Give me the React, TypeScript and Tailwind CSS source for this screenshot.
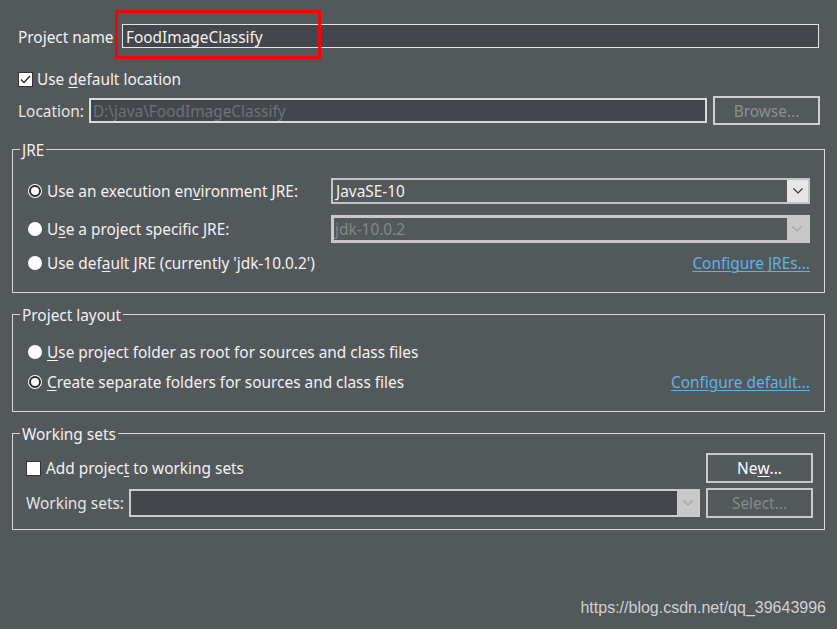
import React from "react";

const U = ({ children }: { children: React.ReactNode }) => (
  <span className="underline underline-offset-2 decoration-1">{children}</span>
);

const Radio = ({ selected }: { selected?: boolean }) =>
  selected ? (
    <span className="w-[14px] h-[14px] rounded-full bg-white flex items-center justify-center shrink-0">
      <span className="w-[12px] h-[12px] rounded-full border-[2px] border-[#2a2a2a] bg-white" />
    </span>
  ) : (
    <span className="w-[14px] h-[14px] rounded-full bg-white shrink-0" />
  );

const Chevron = ({ color }: { color: string }) => (
  <svg width="10" height="6" viewBox="0 0 10 6">
    <path d="M0.5 0.5 L5 5 L9.5 0.5" fill="none" stroke={color} strokeWidth="1.2" />
  </svg>
);

export default function App() {
  return (
    <div
      className="relative w-[837px] h-[629px] overflow-hidden bg-[#53585b] text-[15.4px] text-[#f2f2f2] leading-none"
      style={{ fontFamily: '"Noto Sans", "Open Sans", sans-serif' }}
    >
      <div className="flex flex-col pt-[24px]">
        {/* Project name */}
        <div className="flex items-center pl-[18px] pr-[18px] h-[24px]">
          <span className="w-[104px] pt-[3px]">Project name</span>
          <div className="flex-1 h-[24px] bg-[#43474b] border border-[#e2e2e2] flex items-center pl-[3px] pt-[3px]">
            FoodImageClassify
          </div>
        </div>

        {/* Use default location */}
        <div className="flex items-center pl-[18px] mt-[23px] h-[16px]">
          <span className="w-[15px] h-[15px] bg-white border border-[#333] flex items-center justify-center">
            <svg width="11" height="9" viewBox="0 0 11 9">
              <path d="M1 4.5 L4 7.5 L10 1" fill="none" stroke="#2d2d2d" strokeWidth="1.4" />
            </svg>
          </span>
          <span className="ml-[4px] pt-[2px]">
            Use <U>d</U>efault location
          </span>
        </div>

        {/* Location */}
        <div className="flex items-center pl-[18px] pr-[17px] mt-[9px] h-[29px]">
          <span className="w-[71px] text-[#e6e6e6] pt-[2px]">Location:</span>
          <div className="flex-1 h-[25px] bg-[#43474b] border-2 border-[#dadada] flex items-center pl-[2px] pt-[2px] text-[#6e7275]">
            D:\java\FoodImageClassify
          </div>
          <div className="ml-[6px] w-[107px] h-[29px] border-2 border-[#cfcfcf] flex items-center justify-center pt-[2px] text-[#8c8f91]">
            Browse...
          </div>
        </div>

        {/* JRE group */}
        <div className="relative mx-[12px] mt-[24px] h-[144px] border border-[#d8d8d8] pl-[15px] pr-[14px] pt-[28px]">
          <span className="absolute left-[7px] -top-[10px] px-[2px] pt-[2px] bg-[#53585b] leading-[18px]">JRE</span>
          <div className="flex items-center h-[26px]">
            <div className="w-[303px] flex items-center">
              <Radio selected />
              <span className="ml-[5px] pt-[2px]">
                Use an execution en<U>v</U>ironment JRE:
              </span>
            </div>
            <div className="flex-1 h-[26px] border-2 border-[#c4c4c4] flex items-stretch">
              <div className="flex-1 flex items-center pl-[3px] pt-[2px]">JavaSE-10</div>
              <div className="w-[21px] bg-[#e6e6e6] flex items-center justify-center">
                <Chevron color="#333" />
              </div>
            </div>
          </div>
          <div className="flex items-center h-[28px] mt-[11px]">
            <div className="w-[303px] flex items-center">
              <Radio />
              <span className="ml-[5px] pt-[2px]">
                U<U>s</U>e a project specific JRE:
              </span>
            </div>
            <div className="flex-1 h-[28px] border-[3px] border-[#c8c8c8] flex items-stretch">
              <div className="flex-1 flex items-center pl-[1px] pt-[2px] text-[#83878a]">jdk-10.0.2</div>
              <div className="w-[20px] bg-[#c8c8c8] flex items-center justify-center">
                <Chevron color="#a4a4a4" />
              </div>
            </div>
          </div>
          <div className="flex items-center h-[22px] mt-[9px]">
            <Radio />
            <span className="ml-[5px] pt-[2px]">
              Use def<U>a</U>ult JRE (currently 'jdk-10.0.2')
            </span>
            <span className="ml-auto pt-[2px] text-[#5ab5ea] underline underline-offset-2 decoration-1">Configure JREs...</span>
          </div>
        </div>

        {/* Project layout group */}
        <div className="relative mx-[12px] mt-[21px] h-[98px] border border-[#d8d8d8] pl-[15px] pr-[14px] pt-[26px]">
          <span className="absolute left-[7px] -top-[10px] px-[2px] pt-[2px] bg-[#53585b] leading-[18px]">Project layout</span>
          <div className="flex items-center h-[22px]">
            <Radio />
            <span className="ml-[5px] pt-[2px]">
              <U>U</U>se project folder as root for sources and class files
            </span>
          </div>
          <div className="flex items-center h-[22px] mt-[8px]">
            <Radio selected />
            <span className="ml-[5px] pt-[2px]">
              <U>C</U>reate separate folders for sources and class files
            </span>
            <span className="ml-auto pt-[2px] text-[#5ab5ea] underline underline-offset-2 decoration-1">Configure default...</span>
          </div>
        </div>

        {/* Working sets group */}
        <div className="relative mx-[12px] mt-[21px] h-[97px] border border-[#d8d8d8] pl-[13px] pr-[11px] pt-[19px]">
          <span className="absolute left-[7px] -top-[10px] px-[2px] pt-[2px] bg-[#53585b] leading-[18px]">Working sets</span>
          <div className="flex items-center h-[30px]">
            <span className="w-[15px] h-[15px] bg-white border border-[#333]" />
            <span className="ml-[5px] pt-[2px]">
              Add projec<U>t</U> to working sets
            </span>
            <div className="ml-auto w-[107px] h-[30px] border-2 border-[#c8c8c8] flex items-center justify-center pt-[2px] text-white">
              Ne<U>w</U>...
            </div>
          </div>
          <div className="flex items-center h-[30px] mt-[5px]">
            <span className="w-[103px] pt-[2px] text-[#e4e4e4]">Working sets:</span>
            <div className="flex-1 h-[28px] border-2 border-[#cbcbcb] bg-[#43474b] flex items-stretch">
              <div className="flex-1" />
              <div className="w-[21px] bg-[#c8c8c8] flex items-center justify-center">
                <Chevron color="#a4a4a4" />
              </div>
            </div>
            <div className="ml-[6px] w-[107px] h-[30px] border-2 border-[#c8c8c8] flex items-center justify-center pt-[2px] text-[#868a8c]">
              Select...
            </div>
          </div>
        </div>

        {/* Watermark */}
        <div className="flex justify-end pr-[11px] mt-[70px]">
          <span
            className="text-[16px] text-[#cfd1d2]"
            style={{ fontFamily: '"Liberation Sans", Arial, sans-serif' }}
          >
            https://blog.csdn.net/qq_39643996
          </span>
        </div>
      </div>

      {/* Red highlight box */}
      <div className="absolute left-[115px] top-[10px] w-[206px] h-[49px] border-[3px] border-[#ff0000]" />
    </div>
  );
}
